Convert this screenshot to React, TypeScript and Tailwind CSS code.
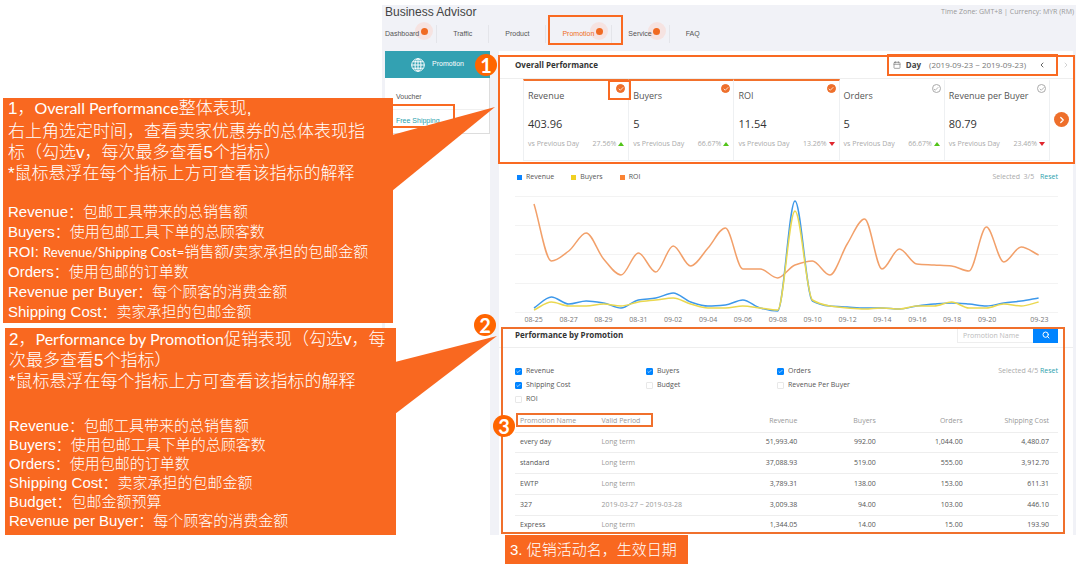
import { useState } from "react";
import { Calendar, Check, ChevronLeft, ChevronRight, Search } from "lucide-react";

const navItems = [
  { label: "Dashboard", dot: true },
  { label: "Traffic", dot: false },
  { label: "Product", dot: false },
  { label: "Promotion", dot: true },
  { label: "Service", dot: true },
  { label: "FAQ", dot: false },
];

const metrics = [
  { name: "Revenue", value: "403.96", change: "27.56%", up: true, selected: true },
  { name: "Buyers", value: "5", change: "66.67%", up: true, selected: true },
  { name: "ROI", value: "11.54", change: "13.26%", up: false, selected: true },
  { name: "Orders", value: "5", change: "66.67%", up: true, selected: false },
  { name: "Revenue per Buyer", value: "80.79", change: "23.46%", up: false, selected: false },
];

const legend = [
  { name: "Revenue", color: "bg-[#0a84ff]" },
  { name: "Buyers", color: "bg-[#f0d022]" },
  { name: "ROI", color: "bg-[#fb8333]" },
];

const days = [
  "08-25", "", "08-27", "", "08-29", "", "08-31", "", "09-02", "", "09-04", "", "09-06", "", "09-08",
  "", "09-10", "", "09-12", "", "09-14", "", "09-16", "", "09-18", "", "09-20", "", "", "09-23",
];

// heights above the bottom grid line, one value a day
const roi = [108, 51, 61, 79, 53, 37, 59, 40, 66, 46, 64, 84, 43, 43, 34, 47, 51, 37, 68, 93, 43, 63, 48, 47, 46, 41, 85, 50, 65, 57];
const revenue = [4, 15, 8, 11, 9, 4, 12, 14, 19, 10, 6, 7, 12, 4, 1, 111, 11, 6, 5, 4, 4, 3, 6, 8, 9, 8, 6, 9, 11, 14];
const buyers = [2, 10, 6, 6, 8, 6, 10, 12, 14, 8, 4, 4, 6, 4, 2, 101, 12, 6, 4, 3, 4, 3, 6, 6, 10, 4, 4, 8, 6, 10];

const filters = [
  { name: "Revenue", checked: true },
  { name: "Buyers", checked: true },
  { name: "Orders", checked: true },
  { name: "Shipping Cost", checked: true },
  { name: "Budget", checked: false },
  { name: "Revenue Per Buyer", checked: false },
  { name: "ROI", checked: false },
];

const rows = [
  ["every day", "Long term", "51,993.40", "992.00", "1,044.00", "4,480.07"],
  ["standard", "Long term", "37,088.93", "519.00", "555.00", "3,912.70"],
  ["EWTP", "Long term", "3,789.31", "138.00", "153.00", "611.31"],
  ["327", "2019-03-27 ~ 2019-03-28", "3,009.38", "94.00", "103.00", "446.10"],
  ["Express", "Long term", "1,344.05", "14.00", "15.00", "193.90"],
];

// monotone cubic through the points
function linePath(values: number[]) {
  const step = 17.4;
  const pts = values.map((v, i) => [19 + i * step, 121 - v]);
  const d = pts.slice(1).map((p, i) => (p[1] - pts[i][1]) / step);
  const m = pts.map((_, i) => {
    if (i === 0) return d[0];
    if (i === pts.length - 1) return d[i - 1];
    if (d[i - 1] * d[i] <= 0) return 0;
    return (2 * d[i - 1] * d[i]) / (d[i - 1] + d[i]);
  });
  let path = `M${pts[0][0]},${pts[0][1]}`;
  for (let i = 1; i < pts.length; i++) {
    const [x0, y0] = pts[i - 1];
    const [x1, y1] = pts[i];
    const h = step / 3;
    path += ` C${x0 + h},${y0 + m[i - 1] * h} ${x1 - h},${y1 - m[i] * h} ${x1},${y1}`;
  }
  return path;
}

function Header() {
  return (
    <header className="h-[46px] pl-[3px] font-['Liberation_Sans',sans-serif]">
      <div className="flex h-[14px] items-center justify-between">
        <h1 className="text-[12px] text-[#444]">Business Advisor</h1>
        <p className="pr-[2px] font-['Open_Sans',sans-serif] text-[7px] text-[#999]">
          Time Zone: GMT+8 | Currency: MYR (RM)
        </p>
      </div>
      <nav className="flex h-[30px] items-center text-[7px] text-[#555]">
        {navItems.map((item, i) => (
          <a
            key={item.label}
            href="#"
            className={`relative isolate flex h-[18px] items-center ${item.dot ? "pr-[17px]" : "pr-4"} ${
              i > 0 ? "border-l border-[#e4e5ea] pl-4" : ""
            } ${item.label === "Promotion" ? "text-[#ee6c23]" : ""}`}
          >
            {item.label}
            {item.dot && (
              <span className="absolute -top-[3px] right-[3px] -z-10 flex size-[18px] items-center justify-center rounded-full bg-[#f6e3e1]">
                <span className="size-[7px] rounded-full bg-[#f06a22]" />
              </span>
            )}
            {item.label === "Promotion" && (
              <span className="absolute -top-[10px] -right-[12px] left-[2px] z-10 h-[30px] border-2 border-[#f96a22]" />
            )}
          </a>
        ))}
      </nav>
    </header>
  );
}

function Sidebar() {
  return (
    <aside className="w-[105px] shrink-0 bg-white font-['Liberation_Sans',sans-serif] text-[7px]">
      <div className="flex h-[27px] items-center justify-center gap-[7px] bg-[#33a1b2] text-white">
        <svg viewBox="0 0 14 14" className="size-[14px]" fill="none" stroke="currentColor">
          <circle cx="7" cy="7" r="6.3" />
          <ellipse cx="7" cy="7" rx="3" ry="6.3" />
          <path d="M7 .7v12.6M.7 7h12.6M1.8 3.8h10.4M1.8 10.2h10.4" />
        </svg>
        Promotion
      </div>
      <div className="border-r border-b border-[#ddd] pt-2">
        <a href="#" className="flex h-[24px] items-center border-b border-[#f0f0f0] pl-[11px] text-[#555]">
          Voucher
        </a>
        <a href="#" className="relative flex h-[23px] items-center pl-[11px] text-[#2a9fae]">
          Free Shipping
          <span className="absolute -top-[6px] left-0 h-[24px] w-[70px] border-2 border-[#f96a22]" />
        </a>
      </div>
    </aside>
  );
}

function MetricCard({ metric, first }: { metric: (typeof metrics)[number]; first: boolean }) {
  return (
    <div
      className={`relative flex-1 border-t-2 border-r border-b border-[#eef0f2] pl-1 ${first ? "border-l" : ""} ${
        metric.selected ? "border-t-[#f2712c]" : "border-t-transparent"
      }`}
    >
      <button
        aria-label={`Select ${metric.name}`}
        className={`absolute top-[3px] right-[3px] flex size-[9px] items-center justify-center rounded-full border ${
          metric.selected ? "border-[#ee6f2b] bg-[#ee6f2b] text-white" : "border-[#aaa] text-[#999]"
        }`}
      >
        <Check className="size-[6px]" strokeWidth={3} />
      </button>
      {first && <span className="absolute -top-px -right-[3px] h-[20px] w-[23px] border-2 border-[#f96a22]" />}
      <p className="pt-[8px] text-[9px] leading-[14px] text-[#555]">{metric.name}</p>
      <p className="pt-[13px] text-[11px] leading-[16px] text-[#333]">{metric.value}</p>
      <p className="flex items-center pt-[6px] pr-[4px] text-[7px] leading-[12px] text-[#aaa]">
        <span className="flex-1">vs Previous Day</span>
        {metric.change}
        <svg viewBox="0 0 6 4" className="ml-[2px] h-[4px] w-[6px]">
          {metric.up ? <path d="M0 4L3 0L6 4z" fill="#52c41a" /> : <path d="M0 0H6L3 4z" fill="#e0262e" />}
        </svg>
      </p>
    </div>
  );
}

function Overview() {
  return (
    <section className="relative">
      <div className="flex h-[28px] items-center border-b border-[#eee] pr-[3px] pl-4">
        <h2 className="flex-1 text-[8px] font-bold text-[#333]">Overall Performance</h2>
        <div className="relative flex items-center text-[8px] text-[#777]">
          <Calendar className="size-[8px]" />
          <span className="ml-[5px] font-bold text-[#444]">Day</span>
          <span className="ml-2">(2019-09-23 ~ 2019-09-23)</span>
          <button aria-label="Previous day" className="ml-3 text-[#666]">
            <ChevronLeft className="size-[8px]" strokeWidth={3} />
          </button>
          <span className="absolute top-1/2 -right-[12px] -left-[6px] h-[22px] -translate-y-1/2 border-2 border-[#f96a22]" />
        </div>
        <button aria-label="Next day" className="ml-4 text-[#bbb]">
          <ChevronRight className="size-[8px]" />
        </button>
      </div>
      <div className="relative flex h-[82px] pr-[23px] pl-6">
        {metrics.map((m, i) => (
          <MetricCard key={m.name} metric={m} first={i === 0} />
        ))}
        <button
          aria-label="More metrics"
          className="absolute top-[33px] right-[4px] flex size-[15px] items-center justify-center rounded-full bg-[#ee6f2b] text-white"
        >
          <ChevronRight className="size-[10px]" strokeWidth={3} />
        </button>
      </div>
      <span className="pointer-events-none absolute top-1 -right-[2px] -bottom-[3px] -left-[1px] border-2 border-[#f96a22]" />
      <Badge n="1" className="top-[3px] -left-[24px]" />
    </section>
  );
}

function Trend() {
  return (
    <section className="pr-[15px] pl-4">
      <div className="mt-[9px] flex h-[14px] items-center gap-[17px] pl-[2px] text-[7px] text-[#555]">
        {legend.map((l) => (
          <span key={l.name} className="flex items-center gap-1">
            <span className={`size-[5px] ${l.color}`} />
            {l.name}
          </span>
        ))}
        <span className="ml-auto text-[#aaa]">
          Selected&nbsp; 3/5 <button className="ml-1 text-[#2a9fae]">Reset</button>
        </span>
      </div>
      <svg viewBox="0 0 543 122" preserveAspectRatio="none" className="mt-[7px] h-[122px] w-full" fill="none">
        <path d="M0 5.5H543M0 34.5H543M0 63.5H543M0 92.5H543M0 121.5H543" stroke="#f3f3f3" />
        <path d={linePath(roi)} stroke="#f2a06a" strokeWidth="1.5" />
        <path d={linePath(revenue)} stroke="#3d98ea" strokeWidth="1.5" />
        <path d={linePath(buyers)} stroke="#ead850" strokeWidth="1.5" />
      </svg>
      <div className="flex h-[14px] items-center px-[10px] text-[7px] text-[#777]">
        {days.map((d, i) => (
          <span key={i} className="flex w-0 flex-1 justify-center whitespace-nowrap">
            {d}
          </span>
        ))}
      </div>
    </section>
  );
}

function Promotions() {
  const [selected, setSelected] = useState(filters.filter((f) => f.checked).map((f) => f.name));

  function toggle(name: string) {
    setSelected(selected.includes(name) ? selected.filter((n) => n !== name) : [...selected, name]);
  }

  return (
    <section className="relative">
      <div className="flex h-[21px] items-start justify-between border-b border-[#eee] pr-[15px] pl-4">
        <h2 className="text-[8px] leading-[16px] font-bold text-[#333]">Performance by Promotion</h2>
        <form className="flex" onSubmit={(e) => e.preventDefault()}>
          <input
            aria-label="Promotion Name"
            placeholder="Promotion Name"
            className="h-[16px] w-[76px] border border-r-0 border-[#eee] px-[5px] text-[7px] placeholder:text-[#bbb]"
          />
          <button aria-label="Search" className="flex h-[16px] w-[25px] items-center justify-center bg-[#0084ff] text-white">
            <Search className="size-[8px]" strokeWidth={3} />
          </button>
        </form>
      </div>
      <div className="flex pt-4 pr-[15px] pl-4 text-[7px]">
        <div className="grid flex-1 grid-cols-[131px_131px_1fr]">
          {filters.map((f) => (
            <label key={f.name} className="flex h-[14px] items-center gap-1 text-[#555]">
              <span className="relative flex size-[7px]">
                <input
                  type="checkbox"
                  checked={selected.includes(f.name)}
                  onChange={() => toggle(f.name)}
                  className="size-[7px] appearance-none rounded-[1px] border border-[#e8e8e8] checked:border-[#0084ff] checked:bg-[#0084ff]"
                />
                <Check className="pointer-events-none absolute inset-px size-[5px] text-white" strokeWidth={3} />
              </span>
              {f.name}
            </label>
          ))}
        </div>
        <p className="leading-[14px] text-[#aaa]">
          Selected {selected.length}/5 <button className="text-[#2a9fae]">Reset</button>
        </p>
      </div>
      <div className="relative mr-[15px] ml-4 mt-[5px]">
        <table className="h-[124px] w-full table-fixed text-right text-[7px] leading-[10px] text-[#555]">
          <colgroup>
            <col className="w-[15%]" />
            <col className="w-[21%]" />
            <col className="w-[16%]" />
            <col className="w-[15%]" />
            <col className="w-[16%]" />
            <col className="w-[17%]" />
          </colgroup>
          <thead className="text-[#999]">
            <tr className="h-[21px] border-b border-[#eee]">
              <th className="pl-[5px] text-left font-normal">Promotion Name</th>
              <th className="pl-[5px] text-left font-normal">Valid Period</th>
              <th className="font-normal">Revenue</th>
              <th className="pr-[3px] font-normal">Buyers</th>
              <th className="pr-[3px] font-normal">Orders</th>
              <th className="pr-[9px] font-normal">Shipping Cost</th>
            </tr>
          </thead>
          <tbody>
            {rows.map((r) => (
              <tr key={r[0]} className="border-b border-[#eee] last:border-0">
                <td className="pl-[5px] text-left">{r[0]}</td>
                <td className="pl-[5px] text-left text-[#999]">{r[1]}</td>
                <td>{r[2]}</td>
                <td className="pr-[3px]">{r[3]}</td>
                <td className="pr-[3px]">{r[4]}</td>
                <td className="pr-[9px]">{r[5]}</td>
              </tr>
            ))}
          </tbody>
        </table>
        <span className="absolute top-[2px] left-px h-[14px] w-[137px] border-2 border-[#f0702c]" />
      </div>
      <span className="pointer-events-none absolute top-0 right-[8px] bottom-px left-[2px] border-2 border-[#f0702c]" />
      <Badge n="2" className="-top-[13px] -left-[25px]" />
      <Badge n="3" className="top-[88px] -left-[6px]" />
    </section>
  );
}

function Badge({ n, className }: { n: string; className: string }) {
  return (
    <span
      className={`absolute z-10 flex size-[22px] items-center justify-center rounded-full bg-[#ff6500] font-['Lato',sans-serif] text-[20px] leading-none font-bold text-white ${className}`}
    >
      {n}
    </span>
  );
}

function Notes() {
  return (
    <>
      <div className="absolute top-[98px] left-[3px] z-20 h-[225px] w-[390px] bg-[#f96820] pl-[5px] font-['Liberation_Sans','Noto_Sans_CJK_SC',sans-serif] text-[15px] leading-[20px] font-light whitespace-nowrap text-white">
        <p className="mb-[2px] text-[17px]">
          1，<span className="font-['Lato',sans-serif] text-[16px] font-normal">Overall Performance</span>整体表现,
        </p>
        <div className="mb-[18px] text-[17px] leading-[21px]">
          <p>右上角选定时间，查看卖家优惠券的总体表现指</p>
          <p>标（勾选v，每次最多查看5个指标）</p>
          <p>*鼠标悬浮在每个指标上方可查看该指标的解释</p>
        </div>
        <p>Revenue：包邮工具带来的总销售额</p>
        <p>Buyers：使用包邮工具下单的总顾客数</p>
        <p>
          ROI: <span className="font-['Lato',sans-serif] text-[13px] font-normal">Revenue/Shipping Cost=</span>
          销售额/卖家承担的包邮金额
        </p>
        <p>Orders：使用包邮的订单数</p>
        <p>Revenue per Buyer：每个顾客的消费金额</p>
        <p>Shipping Cost：卖家承担的包邮金额</p>
        <svg viewBox="0 0 103 84" className="absolute top-[9px] left-[389px] h-[84px] w-[103px]">
          <path d="M0 28L103 0L0 84z" fill="#f96820" />
        </svg>
      </div>
      <div className="absolute top-[328px] left-[5px] z-20 h-[207px] w-[391px] bg-[#f96820] pl-1 font-['Liberation_Sans','Noto_Sans_CJK_SC',sans-serif] text-[15px] leading-[19px] font-light whitespace-nowrap text-white">
        <div className="mb-[24px] text-[17px] leading-[21px]">
          <p>
            2，<span className="font-['Lato',sans-serif] text-[16px] font-normal">Performance by Promotion</span>
            促销表现（勾选v，每
          </p>
          <p>次最多查看5个指标）</p>
          <p>*鼠标悬浮在每个指标上方可查看该指标的解释</p>
        </div>
        <p>Revenue：包邮工具带来的总销售额</p>
        <p>Buyers：使用包邮工具下单的总顾客数</p>
        <p>Orders：使用包邮的订单数</p>
        <p>Shipping Cost：卖家承担的包邮金额</p>
        <p>Budget：包邮金额预算</p>
        <p>Revenue per Buyer：每个顾客的消费金额</p>
        <svg viewBox="0 0 102 78" className="absolute top-[8px] left-[390px] h-[78px] w-[102px]">
          <path d="M0 26L102 0L0 78z" fill="#f96820" />
        </svg>
      </div>
    </>
  );
}

export default function App() {
  return (
    <div className="relative min-h-screen bg-white pt-[5px] pr-1 pl-[382px]">
      <div className="bg-[#f1f2f7] font-['Open_Sans',sans-serif]">
        <Header />
        <div className="flex gap-[9px] pr-[3px] pl-[3px]">
          <Sidebar />
          <main className="min-w-0 flex-1 bg-white">
            <Overview />
            <Trend />
            <Promotions />
          </main>
        </div>
      </div>
      <p className="ml-[123px] w-fit bg-[#f96820] pr-[11px] pl-[5px] font-['Liberation_Sans','Noto_Sans_CJK_SC',sans-serif] text-[15px] leading-[29px] font-light text-white">
        3. 促销活动名，生效日期
      </p>
      <Notes />
    </div>
  );
}
